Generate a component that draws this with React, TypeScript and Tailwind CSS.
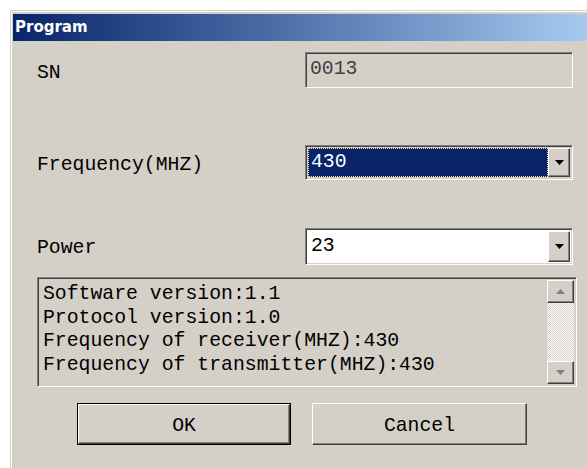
import type { ReactNode } from 'react';

// Classic Win2000 dialog chrome
const FACE = 'bg-[#d4d0c8]';
const MONO = "font-['Liberation_Mono',monospace] text-[19.8px]";

function Sunken({ className = '', children }: { className?: string; children?: ReactNode }) {
  return (
    <div
      className={`border border-t-[#808080] border-l-[#808080] border-b-white border-r-white shadow-[inset_1px_1px_0_#404040,inset_-1px_-1px_0_#d4d0c8] ${className}`}
    >
      {children}
    </div>
  );
}

function Raised({ className = '', children }: { className?: string; children?: ReactNode }) {
  return (
    <div
      className={`${FACE} border border-t-white border-l-white border-b-[#404040] border-r-[#404040] shadow-[inset_-1px_-1px_0_#808080,inset_1px_1px_0_#d4d0c8] ${className}`}
    >
      {children}
    </div>
  );
}

function Arrow({ dir = 'down', color = '#000' }: { dir?: 'up' | 'down'; color?: string }) {
  return (
    <svg width="9" height="5" viewBox="0 0 9 5">
      {dir === 'down' ? (
        <path d="M0 0h9L4.5 5z" fill={color} />
      ) : (
        <path d="M0 5h9L4.5 0z" fill={color} />
      )}
    </svg>
  );
}

function Combo({ value, focused }: { value: string; focused?: boolean }) {
  return (
    <Sunken className={`flex h-full w-[268px] ${focused ? '' : 'bg-white'} p-[2px]`}>
      {focused ? (
        <div className="flex flex-1 items-center bg-[#0a246a] outline outline-1 outline-dotted outline-[#e8d890] -outline-offset-1 pl-[3px] text-white">
          <span className={MONO}>{value}</span>
        </div>
      ) : (
        <div className="flex flex-1 items-center bg-white pl-[3px] text-black">
          <span className={MONO}>{value}</span>
        </div>
      )}
      <Raised className="flex w-[22px] items-center justify-center">
        <Arrow />
      </Raised>
    </Sunken>
  );
}

export default function App() {
  const info = [
    'Software version:1.1',
    'Protocol version:1.0',
    'Frequency of receiver(MHZ):430',
    'Frequency of transmitter(MHZ):430',
  ];

  return (
    <div className="h-[468px] w-[587px] overflow-hidden bg-white">
      <div className="ml-[10px] mt-[10px] w-[640px] border-l border-t border-[#d4d0c8]">
        <div className="border-l border-t border-white">
          <div className={`${FACE} pl-px pt-[2px]`}>
            {/* title bar */}
            <div className="flex h-[27px] items-center bg-gradient-to-r from-[#0a246a] to-[#a6caf0] to-[90%] pl-[2px]">
              <span className="font-['DejaVu_Sans',sans-serif] text-[15px] font-bold text-white">Program</span>
            </div>

            {/* client area */}
            <div className="flex h-[440px] flex-col pl-[24px] text-black">
              <div className="mt-[11px] flex h-[36px] items-center">
                <span className={`${MONO} w-[268px] pt-[7px]`}>SN</span>
                <Sunken className="flex h-full w-[268px] items-center pl-[4px]">
                  <span className={`${MONO} text-[#404040]`}>0013</span>
                </Sunken>
              </div>

              <div className="mt-[57px] flex h-[35px] items-center">
                <span className={`${MONO} w-[268px] pt-[7px]`}>Frequency(MHZ)</span>
                <Combo value="430" focused />
              </div>

              <div className="mt-[48px] flex h-[37px] items-center">
                <span className={`${MONO} w-[268px] pt-[5px]`}>Power</span>
                <Combo value="23" />
              </div>

              <Sunken className="mt-[12px] flex h-[110px] w-[540px] p-[2px]">
                <div className="flex-1 pl-[3px] pt-[3px]">
                  {info.map((line) => (
                    <div key={line} className={`${MONO} leading-[23.5px]`}>
                      {line}
                    </div>
                  ))}
                </div>
                <div className="flex w-[27px] flex-col">
                  <Raised className="flex h-[23px] items-center justify-center">
                    <Arrow dir="up" color="#808080" />
                  </Raised>
                  <div className="flex-1 bg-[repeating-conic-gradient(#ffffff_0_25%,#d4d0c8_0_50%)] bg-[length:2px_2px]" />
                  <Raised className="flex h-[23px] items-center justify-center">
                    <Arrow color="#808080" />
                  </Raised>
                </div>
              </Sunken>

              <div className="mt-[16px] flex h-[42px]">
                <div className="ml-[40px] w-[214px] border border-black">
                  <Raised className="flex h-full items-center justify-center pt-[5px]">
                    <span className={MONO}>OK</span>
                  </Raised>
                </div>
                <Raised className="ml-[21px] flex w-[215px] items-center justify-center pt-[5px]">
                  <span className={MONO}>Cancel</span>
                </Raised>
              </div>
            </div>
          </div>
        </div>
      </div>
    </div>
  );
}
